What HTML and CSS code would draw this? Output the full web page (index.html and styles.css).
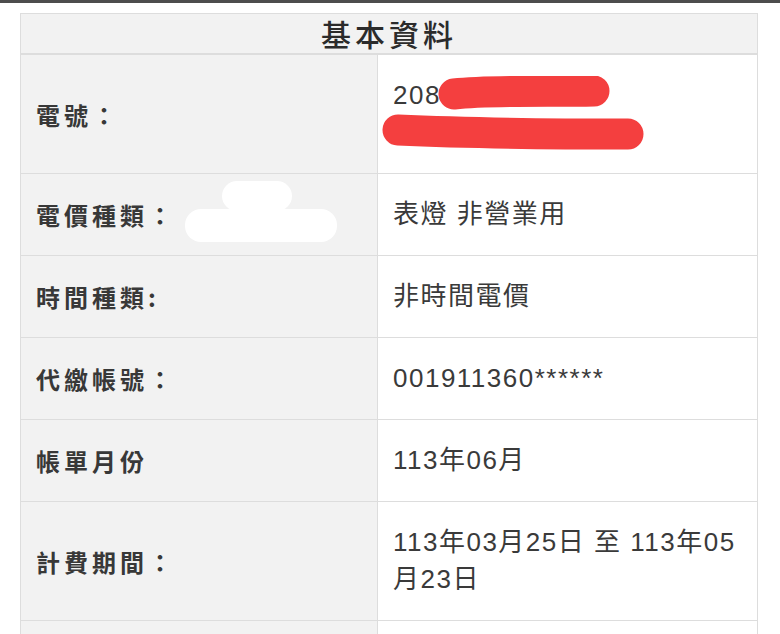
FILE: index.html
```html
<!DOCTYPE html>
<html lang="zh-Hant">
<head>
    <meta charset="UTF-8">
    <meta name="viewport" content="width=device-width, initial-scale=1.0">
    <title>基本資料</title>
    <link rel="stylesheet" href="styles.css">
</head>
<body>
    <div class="topbar"></div>
    <div class="container">
        <table class="info-table">
            <thead>
                <tr>
                    <th colspan="2">基本資料</th>
                </tr>
            </thead>
            <tbody>
                <tr>
                    <td class="label">電號：</td>
                    <td class="value">
                        <div class="masked">
                            208<br>&nbsp;
                            <svg class="scribble" width="280" height="90" viewBox="0 0 280 90">
                                <path d="M72 18 C 110 14, 170 16, 212 15" />
                                <path d="M16 54 C 60 56, 150 58, 246 58" />
                            </svg>
                        </div>
                    </td>
                </tr>
                <tr>
                    <td class="label">
                        <div class="masked">
                            電價種類：
                            <span class="blob blob-top"></span>
                            <span class="blob blob-bottom"></span>
                        </div>
                    </td>
                    <td class="value">表燈 非營業用</td>
                </tr>
                <tr>
                    <td class="label">時間種類:</td>
                    <td class="value">非時間電價</td>
                </tr>
                <tr>
                    <td class="label">代繳帳號：</td>
                    <td class="value">001911360******</td>
                </tr>
                <tr>
                    <td class="label">帳單月份</td>
                    <td class="value">113年06月</td>
                </tr>
                <tr>
                    <td class="label">計費期間：</td>
                    <td class="value">113年03月25日 至 113年05月23日</td>
                </tr>
                <tr>
                    <td class="label">&nbsp;</td>
                    <td class="value">&nbsp;</td>
                </tr>
            </tbody>
        </table>
    </div>
</body>
</html>
```

FILE: styles.css
```css
body {
    margin: 0;
    background-color: #ffffff;
    color: #333;
    font-family: "Liberation Sans", "Noto Sans CJK TC", sans-serif;
}
.topbar {
    height: 3px;
    background-color: #4d4d4d;
}
.container {
    padding: 10px 22px 0 20px;
}
.info-table {
    width: 738px;
    border-collapse: collapse;
    border: 1px solid #dddddd;
}
.info-table th {
    height: 39px;
    padding: 0;
    background-color: #f2f2f2;
    border-bottom: 2px solid #dddddd;
    font-family: "Noto Sans CJK TC", sans-serif;
    font-size: 30px;
    font-weight: 500;
    letter-spacing: 4px;
    color: #2b2b2b;
    line-height: 39px;
}
.info-table td {
    padding: 22px 15px;
    border: 1px solid #dddddd;
    vertical-align: middle;
    line-height: 37px;
}
.label {
    width: 326px;
    background-color: #f2f2f2;
    font-family: "Noto Sans CJK TC", sans-serif;
    font-size: 24px;
    font-weight: 700;
    letter-spacing: 4px;
    color: #383838;
}
.value {
    background-color: #ffffff;
    font-size: 26px;
    letter-spacing: 1.5px;
    color: #3a3a3a;
}
.masked {
    position: relative;
}
.scribble {
    position: absolute;
    left: -11px;
    top: -1px;
    fill: none;
    stroke: #f43f3f;
    stroke-width: 31;
    stroke-linecap: round;
}
.blob {
    position: absolute;
    background-color: #ffffff;
    border-radius: 16px;
}
.blob-top {
    left: 186px;
    top: -15px;
    width: 70px;
    height: 30px;
}
.blob-bottom {
    left: 149px;
    top: 13px;
    width: 152px;
    height: 33px;
}
```
